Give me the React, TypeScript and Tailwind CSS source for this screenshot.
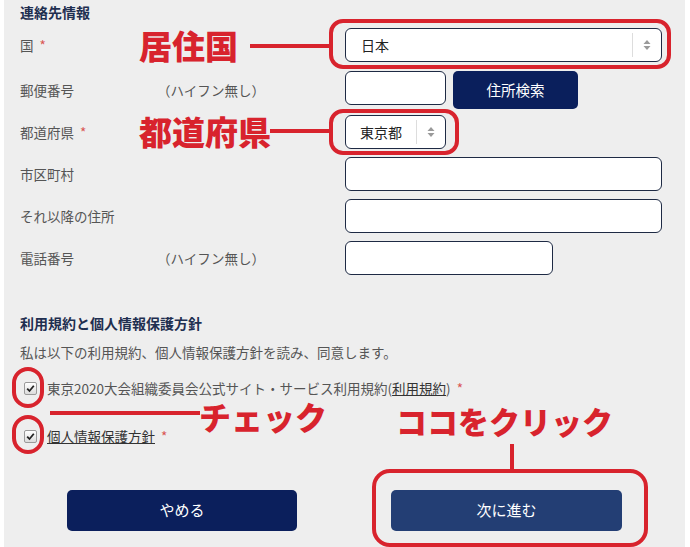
import React from 'react';

const RED = 'border-[#d8232d]';

function SelectArrows() {
  return (
    <svg width="8" height="12" viewBox="0 0 8 12" className="text-[#9a9a9a]">
      <path d="M4 1 L7.5 5 L0.5 5 Z" fill="currentColor" />
      <path d="M4 11 L7.5 7 L0.5 7 Z" fill="currentColor" />
    </svg>
  );
}

function Select({ value, className }: { value: string; className: string }) {
  return (
    <div
      className={`flex h-[34px] items-center rounded-[6px] border-[1.5px] border-[#1e2a44] bg-white text-[14px] text-[#222] ${className}`}
    >
      <span className="flex-1 pl-[15px]">{value}</span>
      <span className="h-[24px] w-px bg-[#dddddd]" />
      <span className="flex w-[28px] justify-center">
        <SelectArrows />
      </span>
    </div>
  );
}

function Input({ className }: { className: string }) {
  return <div className={`h-[34px] rounded-[6px] border-[1.5px] border-[#1e2a44] bg-white ${className}`} />;
}

function Req() {
  return <span className="ml-[6px] text-[#d9534f]">*</span>;
}

function Row({
  label,
  sub,
  children,
  className = '',
}: {
  label: React.ReactNode;
  sub?: string;
  children: React.ReactNode;
  className?: string;
}) {
  return (
    <div className={`flex items-center ${className}`}>
      <div className="w-[137px] text-[13.5px] text-[#555]">{label}</div>
      <div className="w-[188px] text-[13.5px] text-[#555]">{sub}</div>
      {children}
    </div>
  );
}

function Check() {
  return (
    <span className="flex h-[13px] w-[13px] items-center justify-center rounded-[2px] border border-[#9a9a9a] bg-gradient-to-b from-white to-[#dcdcdc]">
      <svg width="9" height="9" viewBox="0 0 9 9">
        <path d="M1.2 4.6 L3.5 7 L7.8 1.8" fill="none" stroke="#222" strokeWidth="1.8" />
      </svg>
    </span>
  );
}

function Annotations() {
  const text = 'absolute font-black leading-none text-[#d8232d]';
  return (
    <div className="pointer-events-none absolute inset-0">
      {/* 居住国 */}
      <div className={`${text} left-[139px] top-[29px] text-[33px]`}>居住国</div>
      <div className="absolute left-[250px] top-[44px] h-[4px] w-[80px] bg-[#d8232d]" />
      <div className={`absolute left-[329px] top-[19px] h-[50px] w-[342px] rounded-[14px] border-[4px] ${RED}`} />

      {/* 都道府県 */}
      <div className={`${text} left-[139px] top-[115px] text-[33px]`}>都道府県</div>
      <div className="absolute left-[270px] top-[129px] h-[4px] w-[60px] bg-[#d8232d]" />
      <div className={`absolute left-[329px] top-[109px] h-[46px] w-[130px] rounded-[14px] border-[4px] ${RED}`} />

      {/* チェック */}
      <div className={`absolute left-[12px] top-[367px] h-[41px] w-[32px] rounded-full border-[4px] ${RED}`} />
      <div className={`absolute left-[12px] top-[415px] h-[39px] w-[32px] rounded-full border-[4px] ${RED}`} />
      <div className="absolute left-[50px] top-[411px] h-[4px] w-[150px] bg-[#d8232d]" />
      <div className={`${text} left-[199px] top-[400px] text-[32px]`}>チェック</div>

      {/* ココをクリック */}
      <div className={`${text} left-[396px] top-[405px] text-[31px]`}>ココをクリック</div>
      <div className="absolute left-[510px] top-[444px] h-[28px] w-[4px] bg-[#d8232d]" />
      <div className={`absolute left-[372px] top-[469px] h-[78px] w-[276px] rounded-[18px] border-[4px] ${RED}`} />
    </div>
  );
}

export default function App() {
  return (
    <div
      className="relative h-[547px] w-[690px] overflow-hidden bg-white"
      style={{ fontFamily: '"Noto Sans CJK JP", "Noto Sans", sans-serif' }}
    >
      <div className="ml-[4px] mr-[5px] h-full bg-[#eeeeee] px-[16px] pt-[2px]">
        <h2 className="text-[14px] font-bold leading-5 text-[#1f2f50]">連絡先情報</h2>

        <div className="mt-[6px]">
          <Row label={<>国<Req /></>}>
            <Select value="日本" className="w-[317px]" />
          </Row>
          <Row label="郵便番号" sub="（ハイフン無し）" className="mt-[9px]">
            <div className="flex items-start">
              <Input className="w-[101px]" />
              <button className="ml-[7px] h-[38px] w-[125px] rounded-[5px] bg-[#0a1f5c] text-[14.5px] text-white">
                住所検索
              </button>
            </div>
          </Row>
          <Row label={<>都道府県<Req /></>} className="mt-[6px]">
            <Select value="東京都" className="w-[101px] [&>span:first-child]:pl-[14px]" />
          </Row>
          <Row label="市区町村" className="mt-[8px]">
            <Input className="w-[317px]" />
          </Row>
          <Row label="それ以降の住所" className="mt-[8px]">
            <Input className="w-[317px]" />
          </Row>
          <Row label="電話番号" sub="（ハイフン無し）" className="mt-[8px]">
            <Input className="w-[208px]" />
          </Row>
        </div>

        <h2 className="mt-[38px] text-[14px] font-bold leading-5 text-[#1f2f50]">利用規約と個人情報保護方針</h2>
        <p className="mt-[9px] text-[13.5px] leading-5 text-[#555]">
          私は以下の利用規約、個人情報保護方針を読み、同意します。
        </p>

        <label className="mt-[16px] flex items-center text-[13.5px] leading-5 text-[#555]">
          <span className="ml-[4px] mr-[10px]">
            <Check />
          </span>
          東京2020大会組織委員会公式サイト・サービス利用規約(<span className="text-[#333] underline">利用規約</span>)
          <Req />
        </label>
        <label className="mt-[28px] flex items-center text-[13.5px] leading-5 text-[#555]">
          <span className="ml-[4px] mr-[10px]">
            <Check />
          </span>
          <span className="text-[#333] underline">個人情報保護方針</span>
          <Req />
        </label>

        <div className="mt-[44px] flex">
          <button className="ml-[47px] h-[41px] w-[230px] rounded-[5px] bg-[#0b1f5c] text-[15px] text-white">
            やめる
          </button>
          <button className="ml-[94px] h-[41px] w-[231px] rounded-[5px] bg-[#233e74] text-[15px] text-white">
            次に進む
          </button>
        </div>
      </div>
      <Annotations />
    </div>
  );
}
